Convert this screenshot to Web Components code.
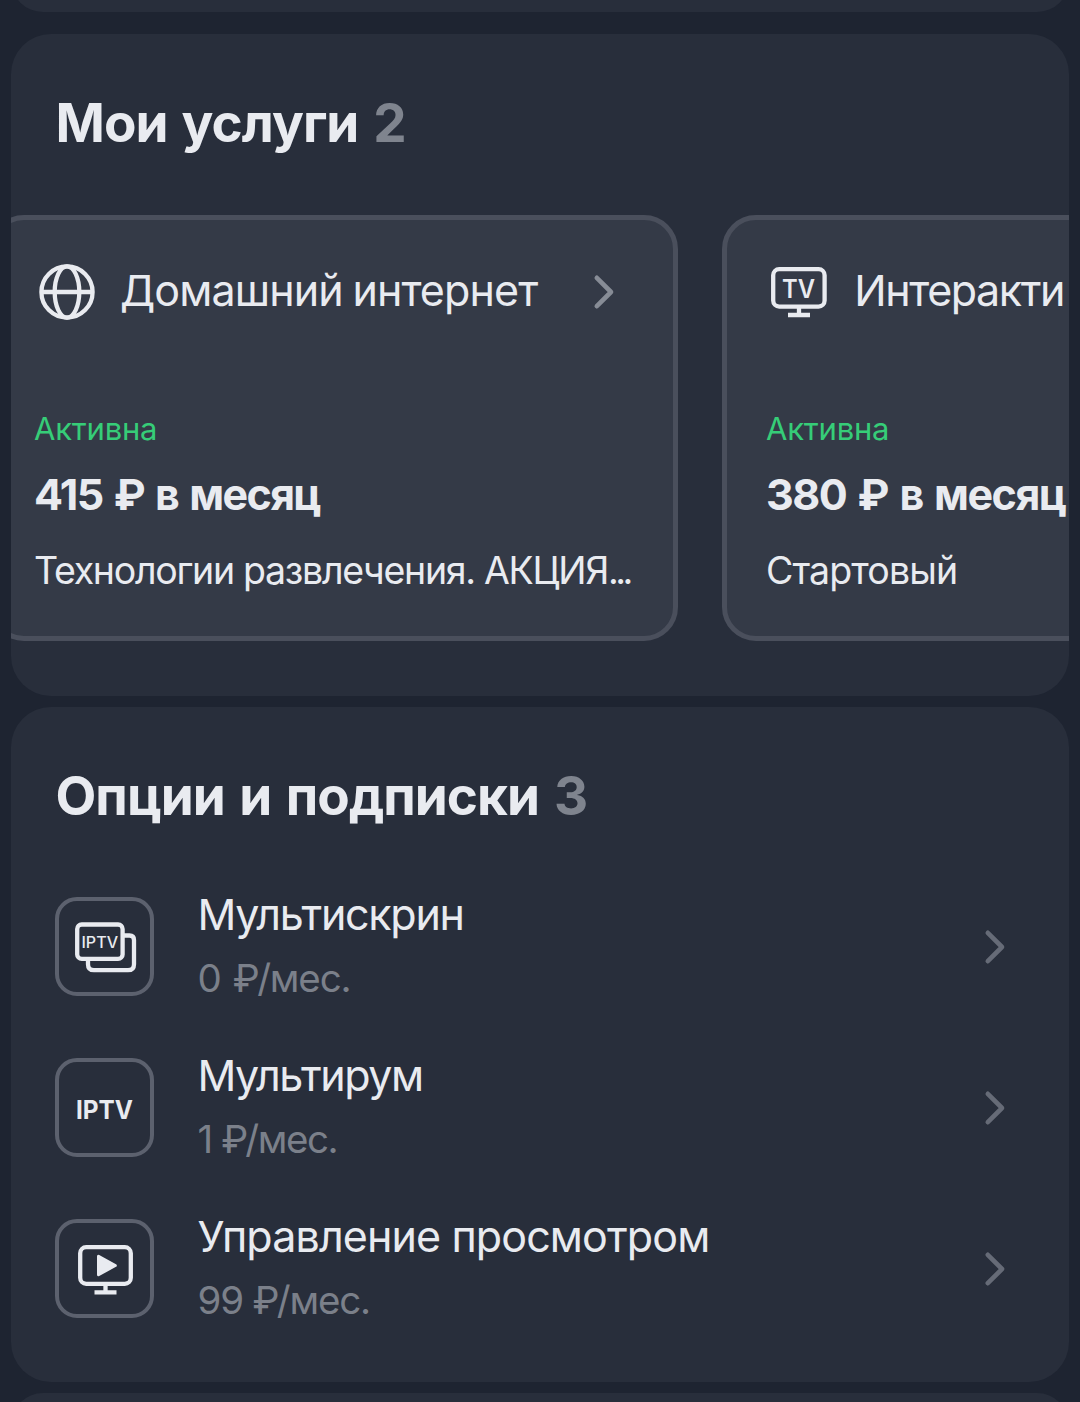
<!DOCTYPE html>
<html lang="ru">
<head>
<meta charset="utf-8">
<title>Мои услуги</title>
<style>
  body { margin: 0; background: #1e2431; color: #e9ebf0; font-family: Inter, "Noto Sans", sans-serif; }
</style>
</head>
<body>
<app-screen>
  <panel-card style="--h:64px; margin-top:-52px"></panel-card>
  <panel-card style="--h:661.5px; --head-ls:-.95px; --head-ws:2.4px; margin-top:22px" heading="Мои услуги" count="2">
    <service-track>
      <service-card style="--name-ls:-.9px; --name-ws:-1.5px; --price-ls:-1.65px; --price-ws:2.6px; --plan-ls:-1.3px" icon="globe" name="Домашний интернет" status="Активна" price="415 ₽ в месяц" plan="Технологии развлечения. АКЦИЯ..."></service-card>
      <service-card style="--name-gap:24.3px; --name-ls:-1.43px; --price-ls:-1.5px; --price-ws:2.7px; --plan-ls:-.88px" icon="tv" name="Интеракти" status="Активна" price="380 ₽ в месяц" plan="Стартовый"></service-card>
    </service-track>
  </panel-card>
  <panel-card style="--h:675px; --head-ls:-.98px; --head-ws:3px; margin-top:11.5px" heading="Опции и подписки" count="3">
    <option-row style="--name-ls:-1.29px; --price-ls:-1.15px; --price-ws:2.5px" icon="screens" name="Мультискрин" price="0 ₽/мес."></option-row>
    <option-row style="--name-ls:-1.43px; --price-ls:-1.4px" icon="iptv" name="Мультирум" price="1 ₽/мес."></option-row>
    <option-row style="--name-ls:-.88px; --price-ls:-1.19px" icon="play" name="Управление просмотром" price="99 ₽/мес."></option-row>
  </panel-card>
  <panel-card style="--h:64px; margin-top:11px"></panel-card>
</app-screen>
<script>
const ICONS = {
  globe: `<svg width="64" height="60" viewBox="34 262 64 60" fill="none" stroke="#e9ebf0" stroke-width="4.3"><circle cx="67" cy="292" r="25.6"/><ellipse cx="67" cy="292" rx="12.3" ry="25.6"/><path d="M41 292H93"/></svg>`,
  tv: `<svg width="64" height="60" viewBox="766 262 64 60" fill="none" stroke="#e9ebf0" stroke-width="4.3"><rect x="773.2" y="269.2" width="51.4" height="37.4" rx="6"/><path d="M799 307V315M788 315H810"/><text x="782" y="297.7" textLength="33" lengthAdjust="spacingAndGlyphs" font-size="25" font-weight="600" fill="#e9ebf0" stroke="none">TV</text></svg>`,
  screens: `<svg width="91" height="91" viewBox="59 901 91 91" fill="none" stroke="#e9ebf0" stroke-width="4.3"><rect x="77.2" y="924.5" width="45.4" height="34.4" rx="4.5"/><path d="M88 960V964.2Q88 970.2 94 970.2H128Q134 970.2 134 964.2V940Q134 935.5 129.5 935.5H124"/><text x="81.5" y="948.3" textLength="36.5" lengthAdjust="spacingAndGlyphs" font-size="15.5" font-weight="500" fill="#e9ebf0" stroke="none">IPTV</text></svg>`,
  iptv: `<svg width="91" height="91" viewBox="59 1062 91 91"><text x="76" y="1118.7" textLength="57" lengthAdjust="spacingAndGlyphs" font-size="25.5" font-weight="650" fill="#e9ebf0">IPTV</text></svg>`,
  play: `<svg width="91" height="91" viewBox="59 1223 91 91" fill="none" stroke="#e9ebf0" stroke-width="4.3"><rect x="80.2" y="1247.2" width="50.6" height="36.6" rx="6"/><path d="M105.5 1284V1292M94.5 1292.3H116.5"/><path d="M98.5 1256.3V1274.7L115.3 1265.5Z" fill="#e9ebf0" stroke-width="3" stroke-linejoin="round"/></svg>`
};
const chevron = (w, color) => `<svg class="chevron" width="${w}" height="44" viewBox="0 0 ${w} 44" fill="none" stroke="${color}" stroke-width="4.6" stroke-linecap="round" stroke-linejoin="round"><path d="M7.8 7.8L22 22L7.8 36.2"/></svg>`;

class Base extends HTMLElement {
  connectedCallback() {
    if (!this.shadowRoot) this.attachShadow({ mode: "open" }).innerHTML = this.render();
  }
  a(n) { return this.getAttribute(n) || ""; }
}

customElements.define("app-screen", class extends Base {
  render() {
    return `<style>:host{display:flex;flex-direction:column;height:1402px;padding:0 11px;overflow:hidden;box-sizing:border-box}</style><slot></slot>`;
  }
});

customElements.define("panel-card", class extends Base {
  render() {
    const head = this.a("heading") ? `<h2><span>${this.a("heading")}</span><span class="c">${this.a("count")}</span></h2>` : "";
    return `<style>
      :host{display:block;flex:none;height:var(--h);background:#282e3b;border-radius:40px;overflow:hidden}
      h2{display:flex;gap:15px;margin:0;padding:57px 0 0 44.5px;font-size:53px;line-height:64px;font-weight:700;letter-spacing:var(--head-ls);word-spacing:var(--head-ws);white-space:nowrap}
      .c{color:#7f848e}
    </style>${head}<slot></slot>`;
  }
});

customElements.define("service-track", class extends Base {
  render() { return `<style>:host{display:flex;gap:44px;margin:60px 0 0 -21px}</style><slot></slot>`; }
});

customElements.define("service-card", class extends Base {
  render() {
    const plan = this.a("plan").replace(/\.\.\.$/, `<span class="dots">...</span>`);
    return `<style>
      :host{display:block;flex:none;box-sizing:border-box;width:688px;height:426px;border:5px solid #4a4f5c;border-radius:34px;background:#343a47;padding:42px 40px 0 39px;white-space:nowrap}
      header{display:flex;align-items:center;height:60px}
      .name{flex:1;padding:0 0 5px var(--name-gap,22px);font-size:43px;line-height:60px;letter-spacing:var(--name-ls);word-spacing:var(--name-ws,0)}
      .status{margin-top:87px;font-size:31px;line-height:40px;letter-spacing:-.2px;color:#36cd78}
      .price{margin-top:19px;font-size:43px;line-height:52px;font-weight:700;letter-spacing:var(--price-ls);word-spacing:var(--price-ws,0)}
      .plan{margin-top:27px;font-size:37.5px;line-height:48px;letter-spacing:var(--plan-ls)}
      .dots{letter-spacing:-3.6px}
    </style>
    <header>${ICONS[this.a("icon")]}<span class="name">${this.a("name")}</span>${chevron(44, "#878c96")}</header>
    <div class="status">${this.a("status")}</div><div class="price">${this.a("price")}</div><div class="plan">${plan}</div>`;
  }
});

customElements.define("option-row", class extends Base {
  render() {
    return `<style>
      :host{display:flex;align-items:center;height:99px;margin:0 60px 62px 44px;white-space:nowrap}
      :host(:first-child){margin-top:69px}
      .box{display:block;box-sizing:border-box;width:99px;height:99px;border:4px solid #5c616e;border-radius:22px}
      .box svg{display:block}
      .text{flex:1;display:flex;flex-direction:column;gap:20.5px;padding:0 0 1.5px 43.5px}
      .name{font-size:43px;line-height:44px;letter-spacing:var(--name-ls)}
      .price{font-size:38.5px;line-height:44px;letter-spacing:var(--price-ls);word-spacing:var(--price-ws,0);color:#7b808a}
    </style>
    <span class="box">${ICONS[this.a("icon")]}</span>
    <div class="text"><span class="name">${this.a("name")}</span><span class="price">${this.a("price")}</span></div>${chevron(29, "#666b77")}`;
  }
});
</script>
</body>
</html>
